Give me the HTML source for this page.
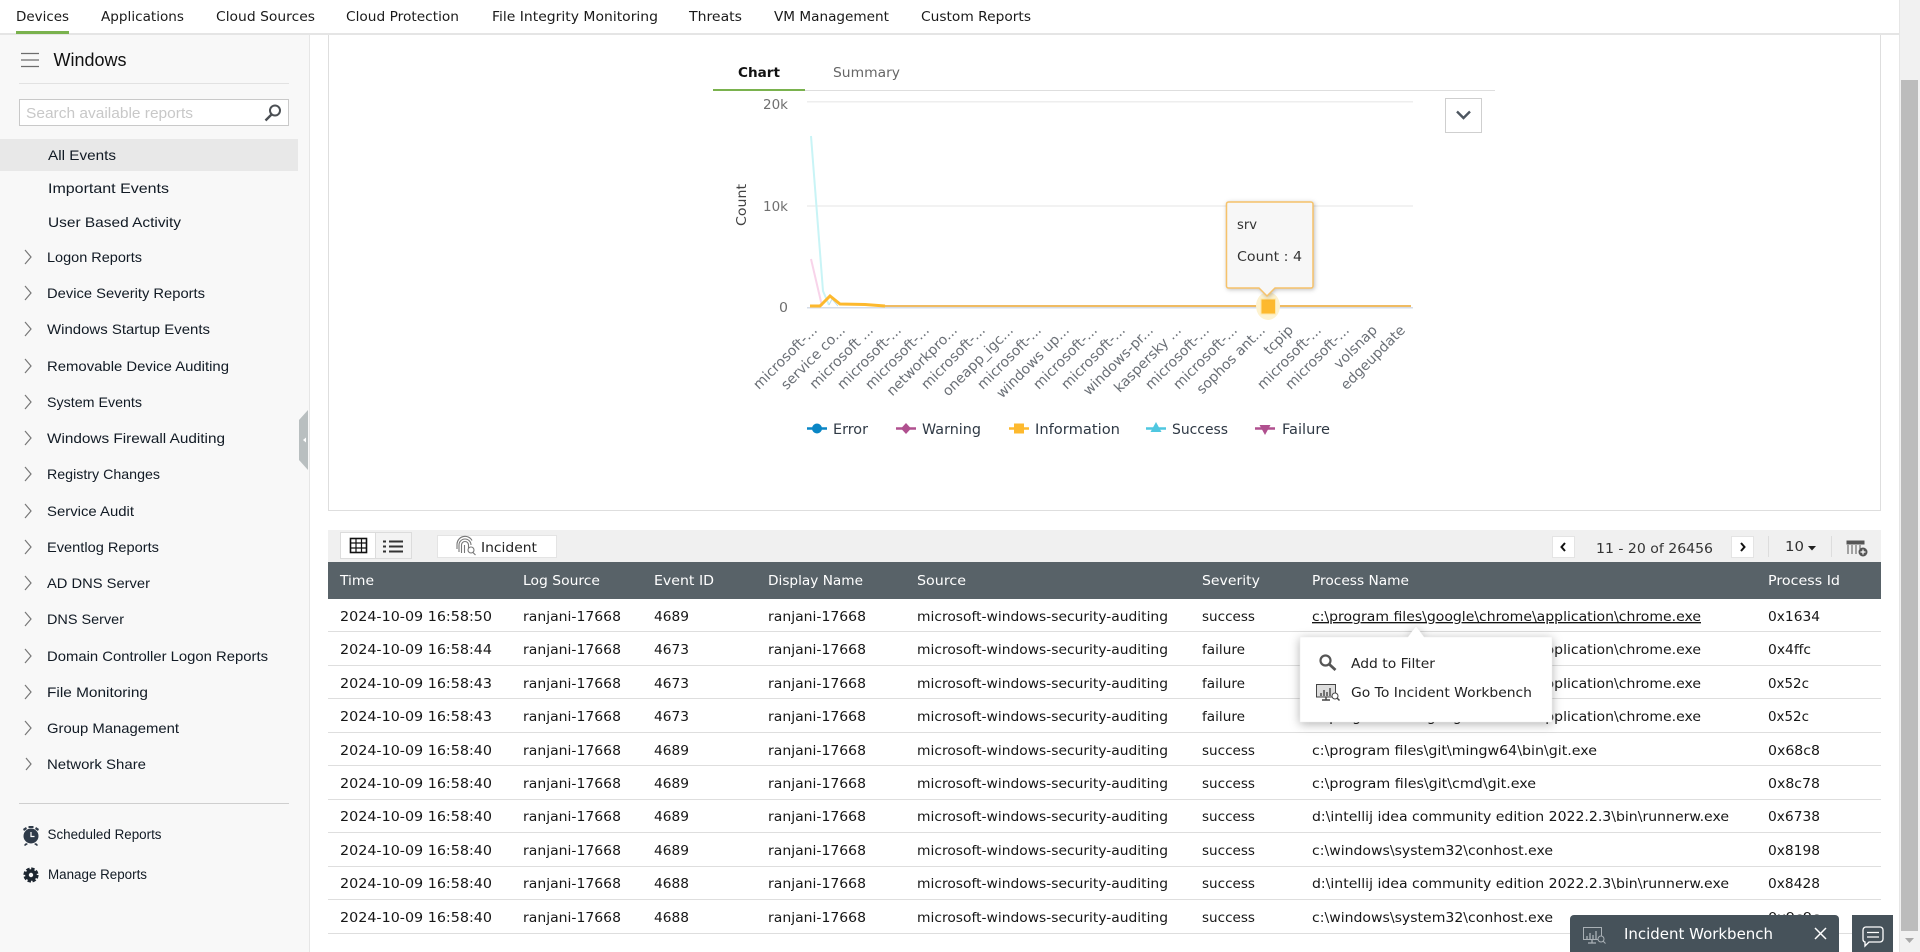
<!DOCTYPE html>
<html lang="en"><head><meta charset="utf-8"><title>Windows Reports - All Events</title>
<style>
html,body{margin:0;padding:0;background:#fff;overflow:hidden;width:1920px;height:952px}
svg{display:block}
text{white-space:pre}
.n{font:13.5px "DejaVu Sans",sans-serif;fill:#1a1a1a}
.s{font:14px "Liberation Sans",sans-serif;fill:#111a24}
.h{font:13.5px "DejaVu Sans",sans-serif;fill:#fff}
.t{font:13.5px "DejaVu Sans",sans-serif;fill:#161616}
.x{font:14px "DejaVu Sans",sans-serif;fill:#6a6f76}
.y{font:13px "DejaVu Sans",sans-serif;fill:#6f6f6f}
.l{font:14px "DejaVu Sans",sans-serif;fill:#2f3945}
</style></head><body>
<svg xmlns="http://www.w3.org/2000/svg" width="1920" height="952" viewBox="0 0 1920 952">
<rect width="1920" height="952" fill="#fff"/>
<!-- sidebar -->
<rect x="0" y="34" width="309" height="918" fill="#f8f8f8"/>
<rect x="309" y="34" width="1" height="918" fill="#e6e6e6"/>
<!-- nav -->
<rect x="0" y="33" width="1899" height="2" fill="#e5e5e5"/>
<rect x="16" y="31" width="53" height="3" fill="#7ab24e"/>
<g>
<text class="n" x="16" y="21" textLength="53" lengthAdjust="spacingAndGlyphs">Devices</text>
<text class="n" x="101" y="21" textLength="83" lengthAdjust="spacingAndGlyphs">Applications</text>
<text class="n" x="216" y="21" textLength="99" lengthAdjust="spacingAndGlyphs">Cloud Sources</text>
<text class="n" x="346" y="21" textLength="113" lengthAdjust="spacingAndGlyphs">Cloud Protection</text>
<text class="n" x="492" y="21" textLength="166" lengthAdjust="spacingAndGlyphs">File Integrity Monitoring</text>
<text class="n" x="689" y="21" textLength="53" lengthAdjust="spacingAndGlyphs">Threats</text>
<text class="n" x="774" y="21" textLength="115" lengthAdjust="spacingAndGlyphs">VM Management</text>
<text class="n" x="921" y="21" textLength="110" lengthAdjust="spacingAndGlyphs">Custom Reports</text>
</g>
<!-- sidebar head -->
<g stroke="#6d6d6d" stroke-width="1.2"><path d="M21 53.5H39M21 60H39M21 66.5H39"/></g>
<text x="53.5" y="66" font-family="Liberation Sans, sans-serif" font-size="18" fill="#111" textLength="73" lengthAdjust="spacingAndGlyphs">Windows</text>
<rect x="19" y="83" width="270" height="1" fill="#e2e2e2"/>
<rect x="19.5" y="99.5" width="269" height="26" fill="#fff" stroke="#c9c9c9"/>
<text x="26" y="118" font-family="Liberation Sans, sans-serif" font-size="14.5" fill="#c8c8c8" textLength="167" lengthAdjust="spacingAndGlyphs">Search available reports</text>
<g fill="none" stroke="#4b4f54"><circle cx="275" cy="110.5" r="5" stroke-width="2"/><path d="M271.5 114.5L265.5 120.5" stroke-width="2.4"/></g>
<rect x="0" y="139" width="298" height="32" fill="#e8e8e8"/>
<text class="s" x="48" y="160" textLength="68" lengthAdjust="spacingAndGlyphs">All Events</text>
<text class="s" x="48" y="193" textLength="121" lengthAdjust="spacingAndGlyphs">Important Events</text>
<text class="s" x="48" y="227" textLength="133" lengthAdjust="spacingAndGlyphs">User Based Activity</text>
<text class="s" x="47" y="262" textLength="95" lengthAdjust="spacingAndGlyphs">Logon Reports</text>
<text class="s" x="47" y="298" textLength="158" lengthAdjust="spacingAndGlyphs">Device Severity Reports</text>
<text class="s" x="47" y="334" textLength="163" lengthAdjust="spacingAndGlyphs">Windows Startup Events</text>
<text class="s" x="47" y="371" textLength="182" lengthAdjust="spacingAndGlyphs">Removable Device Auditing</text>
<text class="s" x="47" y="407" textLength="95" lengthAdjust="spacingAndGlyphs">System Events</text>
<text class="s" x="47" y="443" textLength="178" lengthAdjust="spacingAndGlyphs">Windows Firewall Auditing</text>
<text class="s" x="47" y="479" textLength="113" lengthAdjust="spacingAndGlyphs">Registry Changes</text>
<text class="s" x="47" y="516" textLength="87" lengthAdjust="spacingAndGlyphs">Service Audit</text>
<text class="s" x="47" y="552" textLength="112" lengthAdjust="spacingAndGlyphs">Eventlog Reports</text>
<text class="s" x="47" y="588" textLength="103" lengthAdjust="spacingAndGlyphs">AD DNS Server</text>
<text class="s" x="47" y="624" textLength="77" lengthAdjust="spacingAndGlyphs">DNS Server</text>
<text class="s" x="47" y="661" textLength="221" lengthAdjust="spacingAndGlyphs">Domain Controller Logon Reports</text>
<text class="s" x="47" y="697" textLength="101" lengthAdjust="spacingAndGlyphs">File Monitoring</text>
<text class="s" x="47" y="733" textLength="132" lengthAdjust="spacingAndGlyphs">Group Management</text>
<text class="s" x="47" y="769" textLength="99" lengthAdjust="spacingAndGlyphs">Network Share</text>
<g fill="none" stroke="#777" stroke-width="1.2">
<path d="M25 250l6 7-6 7M25 286l6 7-6 7M25 322l6 7-6 7M25 359l6 7-6 7M25 395l6 7-6 7M25 431l6 7-6 7M25 467l6 7-6 7M25 504l6 7-6 7M25 540l6 7-6 7M25 576l6 7-6 7M25 612l6 7-6 7M25 649l6 7-6 7M25 685l6 7-6 7M25 721l6 7-6 7M26 758l5 6-5 6"/>
</g>
<path d="M308 410L299 420V460L308 470Z" fill="#b9bfc0"/>
<path d="M303 440l3-2.5v5z" fill="#fff"/>
<rect x="19" y="803" width="270" height="1" fill="#cfcfcf"/>
<g fill="#2f3b49"><circle cx="31" cy="836" r="7.5"/><rect x="28.500" y="826" width="5" height="2"/><path d="M23 829l3-2 1 2-3 2zM39 829l-3-2-1 2 3 2zM26 843l-2 2 1 1 3-2zM36 843l2 2-1 1-3-2z"/></g>
<path d="M31 832v4.500h3.500" stroke="#fff" stroke-width="1.200" fill="none"/>
<text class="s" x="47.500" y="839" style="font-size:13.5px" textLength="114" lengthAdjust="spacingAndGlyphs">Scheduled Reports</text>
<g><circle cx="31" cy="875" r="5.800" fill="#1d2630"/><circle cx="31" cy="875" r="6.400" fill="none" stroke="#1d2630" stroke-width="2.400" stroke-dasharray="3.400 1.630"/><circle cx="31" cy="875" r="2.200" fill="#f8f8f8"/></g>
<text class="s" x="48" y="879" style="font-size:13.5px" textLength="99" lengthAdjust="spacingAndGlyphs">Manage Reports</text>

<!-- panel -->
<path d="M328.500 35V510.500H1880.500V35" fill="none" stroke="#dedede"/>
<!-- tabs -->
<rect x="713" y="90" width="782" height="1" fill="#dedede"/>
<rect x="713" y="89" width="92" height="2" fill="#7ab24e"/>
<text x="738" y="77" font-family="DejaVu Sans, sans-serif" font-size="13.500" font-weight="700" fill="#111" textLength="42" lengthAdjust="spacingAndGlyphs">Chart</text>
<text x="833" y="77" font-family="DejaVu Sans, sans-serif" font-size="13.500" fill="#666" textLength="67" lengthAdjust="spacingAndGlyphs">Summary</text>
<!-- chart -->
<rect x="807" y="101" width="606" height="1.500" fill="#eee"/>
<rect x="807" y="205.500" width="606" height="1" fill="#e6e6e6"/>
<rect x="807" y="307" width="606" height="1.500" fill="#d5dce8"/>
<text class="y" x="763" y="109" textLength="25" lengthAdjust="spacingAndGlyphs">20k</text>
<text class="y" x="763" y="211" textLength="25" lengthAdjust="spacingAndGlyphs">10k</text>
<text class="y" x="779" y="312" textLength="9" lengthAdjust="spacingAndGlyphs">0</text>
<text transform="translate(746,226) rotate(-90)" font-family="DejaVu Sans, sans-serif" font-size="13.500" fill="#444" textLength="42" lengthAdjust="spacingAndGlyphs">Count</text>
<rect x="1445.500" y="98.500" width="36" height="34" fill="#fff" stroke="#cfcfcf"/>
<path d="M1457 111.500l6.500 6.500 6.500-6.500" fill="none" stroke="#4d5660" stroke-width="2.400"/>
<path d="M811 136L823 291L829 305" fill="none" stroke="#c9f4f6" stroke-width="2"/>
<path d="M829 305L832 299L838 306" fill="none" stroke="#bcdff0" stroke-width="1"/>
<path d="M811 259L822 306" fill="none" stroke="#f8d4ea" stroke-width="2"/>
<path d="M885 306H1411" fill="none" stroke="#efbb62" stroke-width="2"/>
<path d="M810 306H820L830 296L840 304L865 304.500L885 306" fill="none" stroke="#fdb92e" stroke-width="3"/>
<ellipse cx="1268" cy="306" rx="12" ry="14" fill="#fdf2cf"/>
<rect x="1261" y="299" width="14.500" height="15" fill="#fdb92e" stroke="#fde7a8" stroke-width="1"/>
<!-- tooltip -->
<path d="M1226.500 204a2 2 0 0 1 2-2H1311a2 2 0 0 1 2 2V286a2 2 0 0 1-2 2H1275L1267 296L1259 288H1228.500a2 2 0 0 1-2-2Z" fill="#f7f7f7" stroke="#f6c26a" stroke-width="1.500" style="filter:drop-shadow(1px 1px 2px rgba(0,0,0,.25))"/>
<text x="1237" y="229" font-family="DejaVu Sans, sans-serif" font-size="13.500" fill="#333" textLength="20" lengthAdjust="spacingAndGlyphs">srv</text>
<text x="1237" y="261" font-family="DejaVu Sans, sans-serif" font-size="13.500" fill="#333" textLength="65" lengthAdjust="spacingAndGlyphs">Count : 4</text>
<!-- x labels -->
<g>
<text class="x" text-anchor="end" transform="translate(818,331) rotate(-45)">microsoft-...</text>
<text class="x" text-anchor="end" transform="translate(846,331) rotate(-45)">service co...</text>
<text class="x" text-anchor="end" transform="translate(874,331) rotate(-45)">microsoft ...</text>
<text class="x" text-anchor="end" transform="translate(902,331) rotate(-45)">microsoft-...</text>
<text class="x" text-anchor="end" transform="translate(930,331) rotate(-45)">microsoft-...</text>
<text class="x" text-anchor="end" transform="translate(958,331) rotate(-45)">networkpro...</text>
<text class="x" text-anchor="end" transform="translate(986,331) rotate(-45)">microsoft-...</text>
<text class="x" text-anchor="end" transform="translate(1014,331) rotate(-45)">oneapp_igc...</text>
<text class="x" text-anchor="end" transform="translate(1042,331) rotate(-45)">microsoft-...</text>
<text class="x" text-anchor="end" transform="translate(1070,331) rotate(-45)">windows up...</text>
<text class="x" text-anchor="end" transform="translate(1098,331) rotate(-45)">microsoft-...</text>
<text class="x" text-anchor="end" transform="translate(1126,331) rotate(-45)">microsoft-...</text>
<text class="x" text-anchor="end" transform="translate(1154,331) rotate(-45)">windows-pr...</text>
<text class="x" text-anchor="end" transform="translate(1182,331) rotate(-45)">kaspersky ...</text>
<text class="x" text-anchor="end" transform="translate(1210,331) rotate(-45)">microsoft-...</text>
<text class="x" text-anchor="end" transform="translate(1238,331) rotate(-45)">microsoft-...</text>
<text class="x" text-anchor="end" transform="translate(1266,331) rotate(-45)">sophos ant...</text>
<text class="x" text-anchor="end" transform="translate(1294,331) rotate(-45)">tcpip</text>
<text class="x" text-anchor="end" transform="translate(1322,331) rotate(-45)">microsoft-...</text>
<text class="x" text-anchor="end" transform="translate(1350,331) rotate(-45)">microsoft-...</text>
<text class="x" text-anchor="end" transform="translate(1378,331) rotate(-45)">volsnap</text>
<text class="x" text-anchor="end" transform="translate(1406,331) rotate(-45)">edgeupdate</text>
</g>
<!-- legend -->
<g stroke-width="2.500">
<path d="M807 428.500H827" stroke="#0a86c5"/><circle cx="817" cy="428.500" r="5" fill="#0a86c5"/>
<path d="M896 428.500H916" stroke="#b0508f"/><path d="M906 423l5 5.500-5 5.500-5-5.500z" fill="#b0508f"/>
<path d="M1009 428.500H1029" stroke="#fdb92e"/><rect x="1014" y="423.500" width="10" height="10" fill="#fdb92e"/>
<path d="M1146 428.500H1166" stroke="#4fc7e0"/><path d="M1156 422l5.500 10h-11z" fill="#4fc7e0"/>
<path d="M1255 428.500H1275" stroke="#b0508f"/><path d="M1265 435l-5.500-10h11z" fill="#b0508f"/>
</g>
<text class="l" x="833" y="434" textLength="35" lengthAdjust="spacingAndGlyphs">Error</text>
<text class="l" x="922" y="434" textLength="59" lengthAdjust="spacingAndGlyphs">Warning</text>
<text class="l" x="1035" y="434" textLength="85" lengthAdjust="spacingAndGlyphs">Information</text>
<text class="l" x="1172" y="434" textLength="56" lengthAdjust="spacingAndGlyphs">Success</text>
<text class="l" x="1282" y="434" textLength="48" lengthAdjust="spacingAndGlyphs">Failure</text>

<!-- toolbar -->
<rect x="328" y="530" width="1553" height="32" fill="#f0f0f0"/>
<rect x="340.500" y="532.500" width="35" height="26" fill="#fff" stroke="#dcdcdc"/>
<rect x="375.500" y="532.500" width="36" height="26" fill="#f3f3f3" stroke="#dcdcdc"/>
<rect x="350.500" y="538.500" width="16" height="14" fill="none" stroke="#111" stroke-width="1.600"/>
<path d="M350 543H367M350 548H367M356 538V553M361.500 538V553" stroke="#111" stroke-width="1.200"/>
<path d="M383 541.500h3M383 546.500h3M383 551.500h3M389 541.500h14M389 546.500h14M389 551.500h14" stroke="#333" stroke-width="2"/>
<rect x="437.500" y="535.500" width="119" height="22" fill="#fff" stroke="#e4e4e4"/>
<g fill="none" stroke="#777" stroke-width="1.100"><path d="M459 552v-7a6 6 0 0 1 12 0M461.500 553v-8a3.500 3.500 0 0 1 7 0v3M464.500 553v-8M457 549v-5a8 8 0 0 1 15-3.500"/><circle cx="471" cy="550" r="3"/><path d="M473 552.500l2.500 2.500"/></g>
<text x="481" y="552" font-family="DejaVu Sans, sans-serif" font-size="13.500" fill="#222" textLength="56" lengthAdjust="spacingAndGlyphs">Incident</text>
<rect x="1552.500" y="536.500" width="22" height="21" fill="#fff" stroke="#e4e4e4"/>
<path d="M1565 543l-3.500 4 3.500 4" fill="none" stroke="#111" stroke-width="2"/>
<text x="1596" y="553" font-family="DejaVu Sans, sans-serif" font-size="13.500" fill="#333" textLength="117" lengthAdjust="spacingAndGlyphs">11 - 20 of 26456</text>
<rect x="1731.500" y="536.500" width="22" height="21" fill="#fff" stroke="#e4e4e4"/>
<path d="M1741 543l3.500 4-3.500 4" fill="none" stroke="#111" stroke-width="2"/>
<rect x="1768" y="536" width="1" height="21" fill="#ddd"/>
<text x="1785" y="551" font-family="DejaVu Sans, sans-serif" font-size="13.500" fill="#333" textLength="19" lengthAdjust="spacingAndGlyphs">10</text>
<path d="M1808 546h8l-4 4.500z" fill="#222"/>
<rect x="1831" y="536" width="1" height="21" fill="#ddd"/>
<path d="M1847 541h17v3h-17zM1848 545v9M1852 545v9M1856 545v9M1860 545v6" fill="#555" stroke="#555" stroke-width="1"/>
<circle cx="1863" cy="552" r="4.500" fill="#555"/><path d="M1860.500 552h5M1863 549.500v5" stroke="#fff" stroke-width="1.200"/>

<!-- table header -->
<rect x="328" y="562" width="1553" height="37" fill="#586268"/>
<text class="h" x="340" y="585" textLength="34" lengthAdjust="spacingAndGlyphs">Time</text>
<text class="h" x="523" y="585" textLength="77" lengthAdjust="spacingAndGlyphs">Log Source</text>
<text class="h" x="654" y="585" textLength="60" lengthAdjust="spacingAndGlyphs">Event ID</text>
<text class="h" x="768" y="585" textLength="95" lengthAdjust="spacingAndGlyphs">Display Name</text>
<text class="h" x="917" y="585" textLength="49" lengthAdjust="spacingAndGlyphs">Source</text>
<text class="h" x="1202" y="585" textLength="58" lengthAdjust="spacingAndGlyphs">Severity</text>
<text class="h" x="1312" y="585" textLength="97" lengthAdjust="spacingAndGlyphs">Process Name</text>
<text class="h" x="1768" y="585" textLength="72" lengthAdjust="spacingAndGlyphs">Process Id</text>
<!-- row lines -->
<g fill="#dedede">
<rect x="328" y="631" width="1553" height="1"/><rect x="328" y="665" width="1553" height="1"/><rect x="328" y="698" width="1553" height="1"/><rect x="328" y="732" width="1553" height="1"/><rect x="328" y="765" width="1553" height="1"/><rect x="328" y="799" width="1553" height="1"/><rect x="328" y="832" width="1553" height="1"/><rect x="328" y="866" width="1553" height="1"/><rect x="328" y="899" width="1553" height="1"/><rect x="328" y="933" width="1553" height="1"/>
</g>
<!-- rows -->
<text class="t" x="340" y="621" textLength="152" lengthAdjust="spacingAndGlyphs">2024-10-09 16:58:50</text><text class="t" x="523" y="621" textLength="98" lengthAdjust="spacingAndGlyphs">ranjani-17668</text><text class="t" x="654" y="621" textLength="35" lengthAdjust="spacingAndGlyphs">4689</text><text class="t" x="768" y="621" textLength="98" lengthAdjust="spacingAndGlyphs">ranjani-17668</text><text class="t" x="917" y="621" textLength="251" lengthAdjust="spacingAndGlyphs">microsoft-windows-security-auditing</text><text class="t" x="1202" y="621" textLength="53" lengthAdjust="spacingAndGlyphs">success</text><text class="t" x="1312" y="621" textLength="389" lengthAdjust="spacingAndGlyphs" text-decoration="underline">c:\program files\google\chrome\application\chrome.exe</text><text class="t" x="1768" y="621" textLength="52" lengthAdjust="spacingAndGlyphs">0x1634</text>
<text class="t" x="340" y="654" textLength="152" lengthAdjust="spacingAndGlyphs">2024-10-09 16:58:44</text><text class="t" x="523" y="654" textLength="98" lengthAdjust="spacingAndGlyphs">ranjani-17668</text><text class="t" x="654" y="654" textLength="35" lengthAdjust="spacingAndGlyphs">4673</text><text class="t" x="768" y="654" textLength="98" lengthAdjust="spacingAndGlyphs">ranjani-17668</text><text class="t" x="917" y="654" textLength="251" lengthAdjust="spacingAndGlyphs">microsoft-windows-security-auditing</text><text class="t" x="1202" y="654" textLength="43" lengthAdjust="spacingAndGlyphs">failure</text><text class="t" x="1312" y="654" textLength="389" lengthAdjust="spacingAndGlyphs">c:\program files\google\chrome\application\chrome.exe</text><text class="t" x="1768" y="654" textLength="43" lengthAdjust="spacingAndGlyphs">0x4ffc</text>
<text class="t" x="340" y="688" textLength="152" lengthAdjust="spacingAndGlyphs">2024-10-09 16:58:43</text><text class="t" x="523" y="688" textLength="98" lengthAdjust="spacingAndGlyphs">ranjani-17668</text><text class="t" x="654" y="688" textLength="35" lengthAdjust="spacingAndGlyphs">4673</text><text class="t" x="768" y="688" textLength="98" lengthAdjust="spacingAndGlyphs">ranjani-17668</text><text class="t" x="917" y="688" textLength="251" lengthAdjust="spacingAndGlyphs">microsoft-windows-security-auditing</text><text class="t" x="1202" y="688" textLength="43" lengthAdjust="spacingAndGlyphs">failure</text><text class="t" x="1312" y="688" textLength="389" lengthAdjust="spacingAndGlyphs">c:\program files\google\chrome\application\chrome.exe</text><text class="t" x="1768" y="688" textLength="41" lengthAdjust="spacingAndGlyphs">0x52c</text>
<text class="t" x="340" y="721" textLength="152" lengthAdjust="spacingAndGlyphs">2024-10-09 16:58:43</text><text class="t" x="523" y="721" textLength="98" lengthAdjust="spacingAndGlyphs">ranjani-17668</text><text class="t" x="654" y="721" textLength="35" lengthAdjust="spacingAndGlyphs">4673</text><text class="t" x="768" y="721" textLength="98" lengthAdjust="spacingAndGlyphs">ranjani-17668</text><text class="t" x="917" y="721" textLength="251" lengthAdjust="spacingAndGlyphs">microsoft-windows-security-auditing</text><text class="t" x="1202" y="721" textLength="43" lengthAdjust="spacingAndGlyphs">failure</text><text class="t" x="1312" y="721" textLength="389" lengthAdjust="spacingAndGlyphs">c:\program files\google\chrome\application\chrome.exe</text><text class="t" x="1768" y="721" textLength="41" lengthAdjust="spacingAndGlyphs">0x52c</text>
<text class="t" x="340" y="755" textLength="152" lengthAdjust="spacingAndGlyphs">2024-10-09 16:58:40</text><text class="t" x="523" y="755" textLength="98" lengthAdjust="spacingAndGlyphs">ranjani-17668</text><text class="t" x="654" y="755" textLength="35" lengthAdjust="spacingAndGlyphs">4689</text><text class="t" x="768" y="755" textLength="98" lengthAdjust="spacingAndGlyphs">ranjani-17668</text><text class="t" x="917" y="755" textLength="251" lengthAdjust="spacingAndGlyphs">microsoft-windows-security-auditing</text><text class="t" x="1202" y="755" textLength="53" lengthAdjust="spacingAndGlyphs">success</text><text class="t" x="1312" y="755" textLength="285" lengthAdjust="spacingAndGlyphs">c:\program files\git\mingw64\bin\git.exe</text><text class="t" x="1768" y="755" textLength="52" lengthAdjust="spacingAndGlyphs">0x68c8</text>
<text class="t" x="340" y="788" textLength="152" lengthAdjust="spacingAndGlyphs">2024-10-09 16:58:40</text><text class="t" x="523" y="788" textLength="98" lengthAdjust="spacingAndGlyphs">ranjani-17668</text><text class="t" x="654" y="788" textLength="35" lengthAdjust="spacingAndGlyphs">4689</text><text class="t" x="768" y="788" textLength="98" lengthAdjust="spacingAndGlyphs">ranjani-17668</text><text class="t" x="917" y="788" textLength="251" lengthAdjust="spacingAndGlyphs">microsoft-windows-security-auditing</text><text class="t" x="1202" y="788" textLength="53" lengthAdjust="spacingAndGlyphs">success</text><text class="t" x="1312" y="788" textLength="224" lengthAdjust="spacingAndGlyphs">c:\program files\git\cmd\git.exe</text><text class="t" x="1768" y="788" textLength="52" lengthAdjust="spacingAndGlyphs">0x8c78</text>
<text class="t" x="340" y="821" textLength="152" lengthAdjust="spacingAndGlyphs">2024-10-09 16:58:40</text><text class="t" x="523" y="821" textLength="98" lengthAdjust="spacingAndGlyphs">ranjani-17668</text><text class="t" x="654" y="821" textLength="35" lengthAdjust="spacingAndGlyphs">4689</text><text class="t" x="768" y="821" textLength="98" lengthAdjust="spacingAndGlyphs">ranjani-17668</text><text class="t" x="917" y="821" textLength="251" lengthAdjust="spacingAndGlyphs">microsoft-windows-security-auditing</text><text class="t" x="1202" y="821" textLength="53" lengthAdjust="spacingAndGlyphs">success</text><text class="t" x="1312" y="821" textLength="417" lengthAdjust="spacingAndGlyphs">d:\intellij idea community edition 2022.2.3\bin\runnerw.exe</text><text class="t" x="1768" y="821" textLength="52" lengthAdjust="spacingAndGlyphs">0x6738</text>
<text class="t" x="340" y="855" textLength="152" lengthAdjust="spacingAndGlyphs">2024-10-09 16:58:40</text><text class="t" x="523" y="855" textLength="98" lengthAdjust="spacingAndGlyphs">ranjani-17668</text><text class="t" x="654" y="855" textLength="35" lengthAdjust="spacingAndGlyphs">4689</text><text class="t" x="768" y="855" textLength="98" lengthAdjust="spacingAndGlyphs">ranjani-17668</text><text class="t" x="917" y="855" textLength="251" lengthAdjust="spacingAndGlyphs">microsoft-windows-security-auditing</text><text class="t" x="1202" y="855" textLength="53" lengthAdjust="spacingAndGlyphs">success</text><text class="t" x="1312" y="855" textLength="241" lengthAdjust="spacingAndGlyphs">c:\windows\system32\conhost.exe</text><text class="t" x="1768" y="855" textLength="52" lengthAdjust="spacingAndGlyphs">0x8198</text>
<text class="t" x="340" y="888" textLength="152" lengthAdjust="spacingAndGlyphs">2024-10-09 16:58:40</text><text class="t" x="523" y="888" textLength="98" lengthAdjust="spacingAndGlyphs">ranjani-17668</text><text class="t" x="654" y="888" textLength="35" lengthAdjust="spacingAndGlyphs">4688</text><text class="t" x="768" y="888" textLength="98" lengthAdjust="spacingAndGlyphs">ranjani-17668</text><text class="t" x="917" y="888" textLength="251" lengthAdjust="spacingAndGlyphs">microsoft-windows-security-auditing</text><text class="t" x="1202" y="888" textLength="53" lengthAdjust="spacingAndGlyphs">success</text><text class="t" x="1312" y="888" textLength="417" lengthAdjust="spacingAndGlyphs">d:\intellij idea community edition 2022.2.3\bin\runnerw.exe</text><text class="t" x="1768" y="888" textLength="52" lengthAdjust="spacingAndGlyphs">0x8428</text>
<text class="t" x="340" y="922" textLength="152" lengthAdjust="spacingAndGlyphs">2024-10-09 16:58:40</text><text class="t" x="523" y="922" textLength="98" lengthAdjust="spacingAndGlyphs">ranjani-17668</text><text class="t" x="654" y="922" textLength="35" lengthAdjust="spacingAndGlyphs">4688</text><text class="t" x="768" y="922" textLength="98" lengthAdjust="spacingAndGlyphs">ranjani-17668</text><text class="t" x="917" y="922" textLength="251" lengthAdjust="spacingAndGlyphs">microsoft-windows-security-auditing</text><text class="t" x="1202" y="922" textLength="53" lengthAdjust="spacingAndGlyphs">success</text><text class="t" x="1312" y="922" textLength="241" lengthAdjust="spacingAndGlyphs">c:\windows\system32\conhost.exe</text><text class="t" x="1768" y="922" textLength="52" lengthAdjust="spacingAndGlyphs">0x9c9c</text>

<!-- popup -->
<path d="M1300 637H1408L1416 626L1424 637H1552V722H1300Z" fill="#fff" stroke="#eee" stroke-width=".5" style="filter:drop-shadow(0 2px 5px rgba(0,0,0,.3))"/>
<circle cx="1325.500" cy="660.500" r="5" fill="none" stroke="#555" stroke-width="2.200"/>
<path d="M1329.500 664.500l6 5.500" stroke="#555" stroke-width="2.800"/>
<text x="1351" y="668" font-family="DejaVu Sans, sans-serif" font-size="13.500" fill="#222" textLength="84" lengthAdjust="spacingAndGlyphs">Add to Filter</text>
<g fill="none" stroke="#444" stroke-width="1"><rect x="1316.500" y="684.500" width="19" height="12.500" fill="#ddd"/><path d="M1321 693v3M1324 690v6M1327 692v4M1330 688v8M1322 700h8M1326 697v3" stroke-width="1.400"/><circle cx="1335" cy="696" r="3" fill="#fff"/><path d="M1337 698l2.500 2.500" stroke-width="1.500"/></g>
<text x="1351" y="697" font-family="DejaVu Sans, sans-serif" font-size="13.500" fill="#222" textLength="181" lengthAdjust="spacingAndGlyphs">Go To Incident Workbench</text>

<!-- workbench bar -->
<path d="M1570 952V919a4 4 0 0 1 4-4H1835a4 4 0 0 1 4 4V952Z" fill="#46525a"/>
<g fill="none" stroke="#aab1b6" stroke-width="1"><rect x="1583.500" y="927.500" width="18" height="12"/><path d="M1587 936v3M1590 933v6M1593 935v4M1596 931v8M1588 943h8M1592 940v3" stroke-width="1.300"/><circle cx="1601" cy="939" r="3" fill="#46525a"/><path d="M1603 941l2.500 2.500"/></g>
<text x="1624" y="939" font-family="DejaVu Sans, sans-serif" font-size="15" fill="#fff" textLength="149" lengthAdjust="spacingAndGlyphs">Incident Workbench</text>
<path d="M1815 928l11 11M1826 928l-11 11" stroke="#fff" stroke-width="1.500"/>
<rect x="1852" y="915" width="41" height="37" fill="#46525a"/>
<path d="M1866 927h14a3 3 0 0 1 3 3v9a3 3 0 0 1-3 3h-11l-4 4v-4a3 3 0 0 1-2-3v-9a3 3 0 0 1 3-3Z" fill="none" stroke="#fff" stroke-width="1.300"/>
<path d="M1867 932.500h12M1867 937h12" stroke="#fff" stroke-width="1.300"/>

<!-- scrollbar -->
<rect x="1899" y="0" width="21" height="952" fill="#f1f1f1"/>
<rect x="1899" y="0" width="1" height="952" fill="#e6e6e6"/>
<rect x="1901" y="80" width="17" height="851" fill="#bcbcbc"/>
<path d="M1905 938h9l-4.500 5z" fill="#a9a9a9"/>
</svg>
</body></html>
